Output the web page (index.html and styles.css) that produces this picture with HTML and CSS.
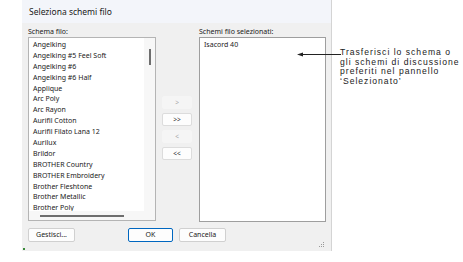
FILE: index.html
```html
<!DOCTYPE html>
<html>
<head>
<meta charset="utf-8">
<link rel="stylesheet" href="styles.css">
</head>
<body>
<div class="page">
  <div class="dialog">
    <div class="titlebar">Seleziona schemi filo</div>
    <div class="content">
      <div class="panes">
        <div class="col col-left">
          <div class="label">Schema filo:</div>
          <div class="listbox listbox-left">
            <div class="items">
              <div class="item">Angelking</div>
              <div class="item">Angelking #5 Feel Soft</div>
              <div class="item">Angelking #6</div>
              <div class="item">Angelking #6 Half</div>
              <div class="item">Applique</div>
              <div class="item">Arc Poly</div>
              <div class="item">Arc Rayon</div>
              <div class="item">Aurifil Cotton</div>
              <div class="item">Aurifil Filato Lana 12</div>
              <div class="item">Aurilux</div>
              <div class="item">Brildor</div>
              <div class="item">BROTHER Country</div>
              <div class="item">BROTHER Embroidery</div>
              <div class="item">Brother Fleshtone</div>
              <div class="item">Brother Metallic</div>
              <div class="item">Brother Poly</div>
            </div>
            <div class="vscroll"><div class="vthumb"></div></div>
            <div class="hscroll"><div class="hthumb"></div></div>
          </div>
        </div>
        <div class="col col-mid">
          <div class="mbtn disabled">&gt;</div>
          <div class="mbtn">&gt;&gt;</div>
          <div class="mbtn disabled">&lt;</div>
          <div class="mbtn">&lt;&lt;</div>
        </div>
        <div class="col col-right">
          <div class="label">Schemi filo selezionati:</div>
          <div class="listbox listbox-right">
            <div class="items">
              <div class="item">Isacord 40</div>
            </div>
          </div>
        </div>
      </div>
      <div class="footer">
        <div class="btn btn-gest">Gestisci...</div>
        <div class="btn btn-ok">OK</div>
        <div class="btn btn-cancel">Cancella</div>
      </div>
      <div class="statusrow">
        <span class="dot"></span>
        <svg class="grip" width="6" height="6" viewBox="0 0 6 6">
          <rect x="4" y="0" width="1" height="1" fill="#9a9a9a"/>
          <rect x="2" y="2" width="1" height="1" fill="#9a9a9a"/>
          <rect x="4" y="2" width="1" height="1" fill="#9a9a9a"/>
          <rect x="0" y="4" width="1" height="1" fill="#9a9a9a"/>
          <rect x="2" y="4" width="1" height="1" fill="#9a9a9a"/>
          <rect x="4" y="4" width="1" height="1" fill="#9a9a9a"/>
        </svg>
      </div>
    </div>
  </div>
  <div class="callout">
    <div class="callout-text">Trasferisci lo schema o<br>gli schemi di discussione<br>preferiti nel pannello<br>‘Selezionato’</div>
  </div>
  <svg class="arrow" width="44" height="7" viewBox="0 0 44 7">
    <line x1="3" y1="3.5" x2="44" y2="3.5" stroke="#222" stroke-width="1"/>
    <polygon points="0,3.5 6,1.5 6,5.5" fill="#222"/>
  </svg>
</div>
</body>
</html>
```

FILE: styles.css
```css
html, body {
  margin: 0;
  padding: 0;
  background: #ffffff;
}
.page {
  position: relative;
  width: 463px;
  height: 262px;
  display: flex;
  align-items: flex-start;
}
.dialog {
  margin-left: 22px;
  width: 310px;
  height: 251px;
  display: flex;
  flex-direction: column;
  font-family: "Noto Sans", "Open Sans", sans-serif;
  color: #1a1a1a;
  border-right: 1px solid #d4d4d4;
  box-sizing: border-box;
}
.titlebar {
  height: 23px;
  background: #f3f5fa;
  font-size: 8.5px;
  line-height: 23px;
  padding-left: 7px;
  color: #202020;
}
.content {
  flex: 1;
  background: #f0f0f0;
  padding: 3px 5px 0 6px;
  display: flex;
  flex-direction: column;
}
.panes {
  display: flex;
}
.col {
  display: flex;
  flex-direction: column;
}
.col-left {
  width: 128px;
}
.col-mid {
  width: 30px;
  margin-left: 6px;
  padding-top: 70px;
  gap: 4px;
}
.col-right {
  width: 127px;
  margin-left: 7px;
}
.label {
  font-size: 7px;
  line-height: 11px;
  height: 11px;
  color: #1a1a1a;
}
.listbox {
  position: relative;
  background: #ffffff;
  border: 1px solid #a6a6a6;
  box-sizing: border-box;
}
.listbox-left {
  height: 184px;
  border-color: #b4b4b4;
}
.listbox-right {
  height: 185px;
  border-color: #9e9e9e;
}
.items {
  padding: 2px 0 0 4px;
}
.item {
  font-size: 7px;
  line-height: 10.9px;
  height: 10.9px;
  white-space: nowrap;
  color: #1a1a1a;
}
.vscroll {
  position: absolute;
  right: 0;
  top: 0;
  width: 11px;
  bottom: 9px;
  background: #f7f7f7;
}
.vthumb {
  position: absolute;
  left: 5px;
  top: 11px;
  width: 1.5px;
  height: 16px;
  background: #6e6e6e;
}
.hscroll {
  position: absolute;
  left: 0;
  right: 0;
  bottom: 0;
  height: 9px;
  background: #f7f7f7;
}
.hthumb {
  position: absolute;
  left: 11px;
  top: 4px;
  width: 84px;
  height: 1.5px;
  background: #6e6e6e;
}
.mbtn {
  height: 13px;
  box-sizing: border-box;
  border: 1px solid #dcdcdc;
  border-radius: 2px;
  background: #fdfdfd;
  font-size: 6.5px;
  line-height: 11px;
  text-align: center;
  color: #333;
}
.mbtn.disabled {
  background: #f5f5f5;
  border-color: #f5f5f5;
  color: #a8a8a8;
}
.footer {
  display: flex;
  margin-top: 6px;
  height: 14px;
}
.btn {
  height: 14px;
  box-sizing: border-box;
  border: 1px solid #d0d0d0;
  border-radius: 2px;
  background: #fdfdfd;
  font-size: 7px;
  line-height: 12px;
  text-align: center;
  color: #1a1a1a;
}
.btn-gest {
  width: 47px;
}
.btn-ok {
  width: 45px;
  margin-left: 53px;
  border-color: #0067c0;
}
.btn-cancel {
  width: 47px;
  margin-left: 6px;
}
.statusrow {
  flex: 1;
  display: flex;
  align-items: flex-end;
  justify-content: space-between;
  padding-bottom: 1px;
  margin-left: -5px;
}
.dot {
  width: 2px;
  height: 2px;
  background: #3a8a3a;
}
.grip {
  margin-bottom: 2px;
  margin-right: 1px;
}
.callout {
  margin-left: 8px;
  margin-top: 48px;
  width: 124px;
}
.callout-text {
  font-family: "Liberation Sans", Arial, sans-serif;
  font-size: 8.6px;
  line-height: 9.7px;
  letter-spacing: 1px;
  color: #222;
  white-space: nowrap;
}
.arrow {
  position: absolute;
  left: 297px;
  top: 51px;
}
```
